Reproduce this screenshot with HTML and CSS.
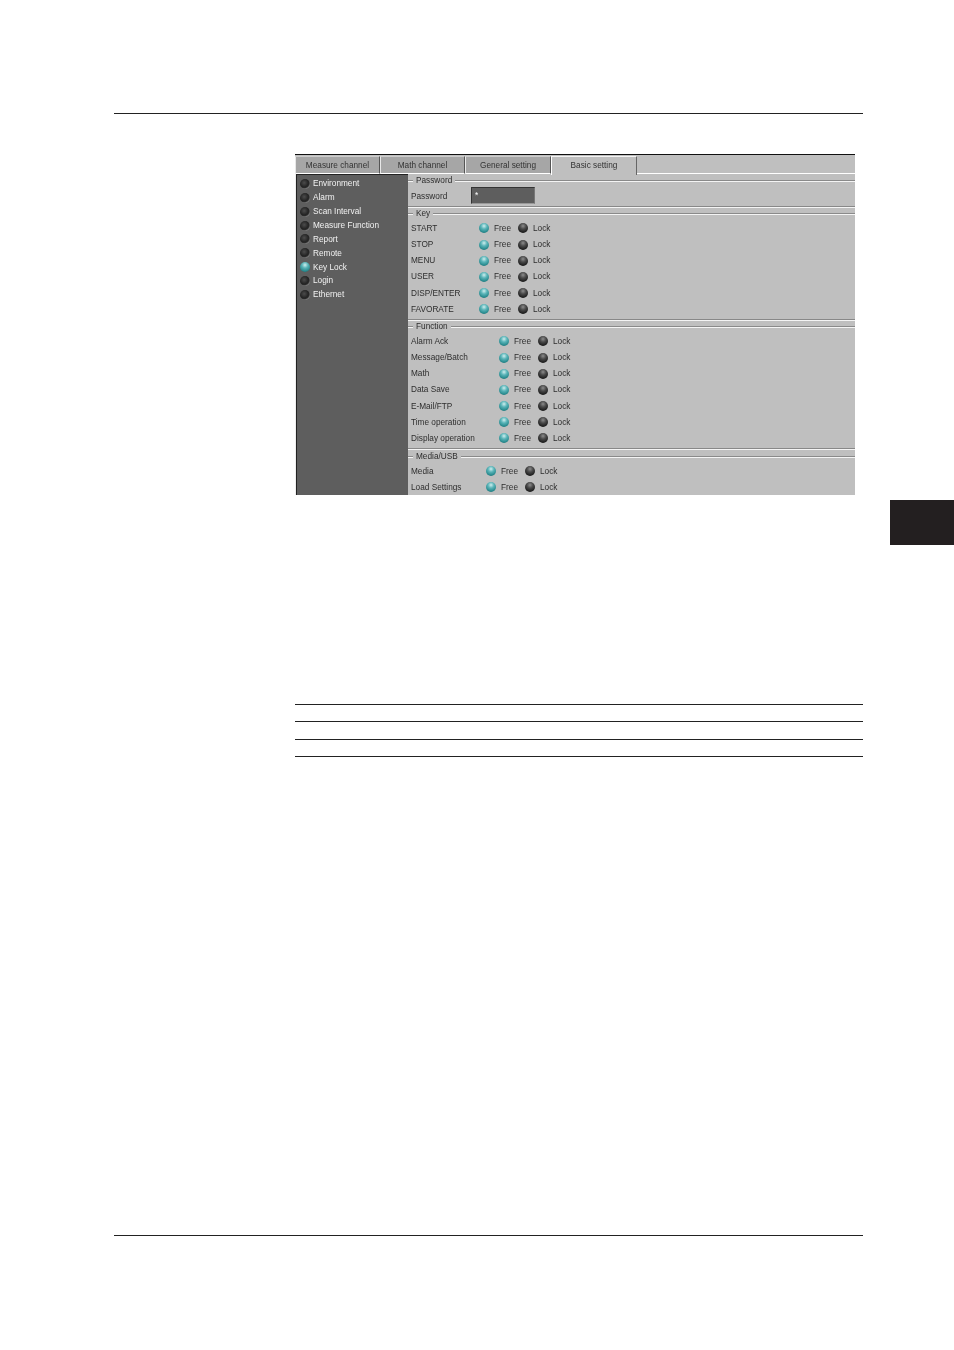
FILE: index.html
```html
<!DOCTYPE html>
<html lang="en">
<head>
<meta charset="UTF-8">
<meta name="viewport" content="width=device-width, initial-scale=1.0">
<title>Basic setting</title>
<link rel="stylesheet" href="styles.css">
</head>
<body>
<div class="page">
  <div class="rule-top"></div>

  <div class="window">
    <!-- Tabs -->
    <div class="tabs">
      <div class="tab tab-1">Measure channel</div>
      <div class="tab tab-2">Math channel</div>
      <div class="tab tab-3">General setting</div>
      <div class="tab tab-4 active">Basic setting</div>
      <div class="tab-rest"></div>
    </div>

    <div class="window-body">
      <!-- Side menu -->
      <div class="side">
        <div class="side-item"><span class="led"></span>Environment</div>
        <div class="side-item"><span class="led"></span>Alarm</div>
        <div class="side-item"><span class="led"></span>Scan Interval</div>
        <div class="side-item"><span class="led"></span>Measure Function</div>
        <div class="side-item"><span class="led"></span>Report</div>
        <div class="side-item"><span class="led"></span>Remote</div>
        <div class="side-item"><span class="led on"></span>Key Lock</div>
        <div class="side-item"><span class="led"></span>Login</div>
        <div class="side-item"><span class="led"></span>Ethernet</div>
      </div>

      <div class="content">
        <!-- Password -->
        <div class="group group-password">
          <div class="legend"><span>Password</span></div>
          <div class="password-row">
            <label>Password</label>
            <div class="password-box">*</div>
          </div>
        </div>

        <!-- Key -->
        <div class="group group-key">
          <div class="legend"><span>Key</span></div>
          <div class="row"><label>START</label><span class="led on"></span><b>Free</b><span class="led"></span><b>Lock</b></div>
          <div class="row"><label>STOP</label><span class="led on"></span><b>Free</b><span class="led"></span><b>Lock</b></div>
          <div class="row"><label>MENU</label><span class="led on"></span><b>Free</b><span class="led"></span><b>Lock</b></div>
          <div class="row"><label>USER</label><span class="led on"></span><b>Free</b><span class="led"></span><b>Lock</b></div>
          <div class="row"><label>DISP/ENTER</label><span class="led on"></span><b>Free</b><span class="led"></span><b>Lock</b></div>
          <div class="row"><label>FAVORATE</label><span class="led on"></span><b>Free</b><span class="led"></span><b>Lock</b></div>
        </div>

        <!-- Function -->
        <div class="group group-function">
          <div class="legend"><span>Function</span></div>
          <div class="row"><label>Alarm Ack</label><span class="led on"></span><b>Free</b><span class="led"></span><b>Lock</b></div>
          <div class="row"><label>Message/Batch</label><span class="led on"></span><b>Free</b><span class="led"></span><b>Lock</b></div>
          <div class="row"><label>Math</label><span class="led on"></span><b>Free</b><span class="led"></span><b>Lock</b></div>
          <div class="row"><label>Data Save</label><span class="led on"></span><b>Free</b><span class="led"></span><b>Lock</b></div>
          <div class="row"><label>E-Mail/FTP</label><span class="led on"></span><b>Free</b><span class="led"></span><b>Lock</b></div>
          <div class="row"><label>Time operation</label><span class="led on"></span><b>Free</b><span class="led"></span><b>Lock</b></div>
          <div class="row"><label>Display operation</label><span class="led on"></span><b>Free</b><span class="led"></span><b>Lock</b></div>
        </div>

        <!-- Media -->
        <div class="group group-media">
          <div class="legend"><span>Media/USB</span></div>
          <div class="row"><label>Media</label><span class="led on"></span><b>Free</b><span class="led"></span><b>Lock</b></div>
          <div class="row"><label>Load Settings</label><span class="led on"></span><b>Free</b><span class="led"></span><b>Lock</b></div>
        </div>
      </div>
    </div>
  </div>

  <div class="table-lines">
    <div class="table-row"></div>
    <div class="table-row"></div>
    <div class="table-row"></div>
  </div>

  <div class="rule-bottom"></div>
</div>

<div class="index-tab"></div>
</body>
</html>
```

FILE: styles.css
```css
body {
  margin: 0;
  background-color: #ffffff;
  font-family: "Liberation Sans", Arial, sans-serif;
}
.page {
  height: 1350px;
  padding: 113px 91px 0 114px;
  box-sizing: border-box;
}
.rule-top, .rule-bottom {
  height: 1px;
  background-color: #222222;
}
.rule-bottom {
  margin-top: 478px;
}
.index-tab {
  position: absolute;
  left: 890px;
  top: 500px;
  width: 64px;
  height: 45px;
  background-color: #231f20;
}

/* window */
.window {
  width: 560px;
  height: 341px;
  margin: 40px 0 0 181px;
  border-top: 1px solid #111111;
  box-sizing: border-box;
  background-color: #bfbfbf;
  display: flex;
  flex-direction: column;
  overflow: hidden;
  filter: blur(0.3px);
}
.tabs {
  display: flex;
  height: 19px;
  flex-shrink: 0;
  font-size: 8.25px;
  color: #333333;
}
.tab {
  box-sizing: border-box;
  height: 18px;
  margin-top: 1px;
  padding-top: 4px;
  text-align: center;
  background-color: #a6a6a6;
  border-top: 1px solid #cccccc;
  border-left: 1px solid #e8e8e8;
  border-right: 1px solid #555555;
  border-bottom: 1px solid #ffffff;
}
.tab-1 { width: 85px; }
.tab-2 { width: 85px; }
.tab-3 { width: 86px; }
.tab-4 { width: 86px; }
.tab.active {
  height: 19px;
  background-color: #bfbfbf;
  border-bottom: none;
  border-top: 1px solid #f4f4f4;
  border-left: 1px solid #ffffff;
  border-right: 1px solid #666666;
}
.tab-rest {
  flex: 1;
  height: 18px;
  border-bottom: 1px solid #ffffff;
}
.window-body {
  flex: 1;
  display: flex;
  border-left: 1px solid #eeeeee;
}
.side {
  width: 112px;
  box-sizing: border-box;
  background-color: #5e5e5e;
  border-left: 1px solid #222222;
  border-top: 1px solid #222222;
  padding-top: 1px;
}
.side-item {
  display: flex;
  align-items: center;
  height: 13.87px;
  padding: 1px 0 0 3px;
  box-sizing: content-box;
  margin-bottom: -1px;
  font-size: 8.25px;
  color: #f2f2f2;
}
.side-item .led {
  margin-right: 3px;
}

/* round lamps */
.led {
  display: inline-block;
  width: 10px;
  height: 10px;
  border-radius: 50%;
  flex-shrink: 0;
  background: radial-gradient(circle at 50% 30%, #8c8c8c 0, #4a4a4a 35%, #1c1c1c 75%, #0a0a0a 100%);
}
.side .led {
  background: radial-gradient(circle at 42% 38%, #4c4c4c 0, #242424 48%, #2a2a2a 58%, #bcbcbc 84%, #e4e4e4 100%);
}
.led.on, .side .led.on {
  background: radial-gradient(circle at 50% 30%, #cfeeee 0, #5ab4b8 35%, #27898d 72%, #12565a 100%);
}

/* groups */
.content {
  flex: 1;
  min-width: 0;
}
.group {
  box-sizing: border-box;
  padding-left: 3px;
  font-size: 8.25px;
  color: #2e2e2e;
}
.legend {
  height: 13.4px;
  display: flex;
  align-items: center;
  margin-left: -3px;
  position: relative;
}
.legend span {
  padding: 0 3px;
  margin-left: 5px;
  background-color: #bfbfbf;
  z-index: 1;
}
.legend::before {
  content: "";
  position: absolute;
  left: 0;
  right: 0;
  top: 6px;
  height: 1px;
  background-color: #8a8a8a;
  border-bottom: 1px solid #f4f4f4;
}
.group-password {
  height: 33px;
  border-bottom: 1px solid #888888;
  box-shadow: 0 1px 0 #f4f4f4;
}
.group-key {
  height: 113px;
  border-bottom: 1px solid #888888;
  box-shadow: 0 1px 0 #f4f4f4;
}
.group-function {
  height: 129px;
  border-bottom: 1px solid #888888;
  box-shadow: 0 1px 0 #f4f4f4;
}
.group-media {
  padding-top: 0.6px;
}
.password-row {
  display: flex;
  align-items: center;
}
.password-row label {
  width: 60px;
  padding-top: 1px;
}
.password-box {
  width: 64px;
  height: 17px;
  box-sizing: border-box;
  padding: 3px 0 0 3px;
  background-color: #5e5e5e;
  border-top: 1px solid #333333;
  border-left: 1px solid #333333;
  border-right: 1px solid #777777;
  border-bottom: 1px solid #999999;
  color: #ffffff;
}
.row {
  display: flex;
  align-items: center;
  height: 16.15px;
}
.row label {
  flex-shrink: 0;
}
.row b {
  font-weight: normal;
  margin-left: 5px;
  width: 24px;
}
.group-key .row label { width: 68px; }
.group-function .row label { width: 88px; }
.group-media .row label { width: 75px; }

/* empty table */
.table-lines {
  margin: 209px 0 0 181px;
  border-top: 1px solid #222222;
}
.table-row {
  height: 16.33px;
  border-bottom: 1px solid #222222;
}
```
